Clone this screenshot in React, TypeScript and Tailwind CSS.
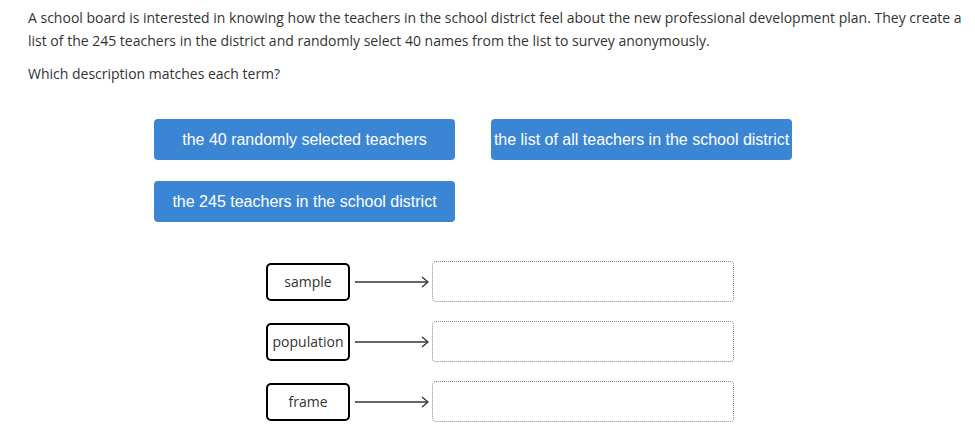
import React from "react";

const terms = ["sample", "population", "frame"];

function Arrow() {
  return (
    <svg width="76" height="14" viewBox="0 0 76 14" className="shrink-0">
      <line x1="0" y1="7" x2="73" y2="7" stroke="#333" strokeWidth="1.3" />
      <polyline points="67,2 73,7 67,12" fill="none" stroke="#333" strokeWidth="1.3" />
    </svg>
  );
}

export default function App() {
  return (
    <div className="w-[975px] h-[448px] bg-white pl-[28px] pt-[6px] text-[#333] font-['Open_Sans',sans-serif]">
      <p className="text-[14px] leading-[23px]">
        A school board is interested in knowing how the teachers in the school district feel about the new professional development plan. They create a
        <br />
        list of the 245 teachers in the district and randomly select 40 names from the list to survey anonymously.
      </p>
      <p className="text-[14px] leading-[23px] mt-[10px]">Which description matches each term?</p>

      <div className="ml-[126px] mt-[34px] grid grid-cols-[301px_301px] gap-x-[36px] gap-y-[21px] font-['Liberation_Sans',Arial,sans-serif] text-white text-[16px]">
        <div className="h-[41px] rounded-[4px] bg-[#3a86d4] flex items-center justify-center whitespace-nowrap">
          the 40 randomly selected teachers
        </div>
        <div className="h-[41px] rounded-[4px] bg-[#3a86d4] flex items-center justify-center whitespace-nowrap">
          the list of all teachers in the school district
        </div>
        <div className="h-[41px] rounded-[4px] bg-[#3a86d4] flex items-center justify-center whitespace-nowrap">
          the 245 teachers in the school district
        </div>
      </div>

      <div className="ml-[238px] mt-[39px] flex flex-col gap-[19px]">
        {terms.map((t) => (
          <div key={t} className="h-[41px] flex items-center">
            <div className="w-[84px] h-[38px] border-2 border-black rounded-[5px] flex items-center justify-center text-[14px] text-[#333]">
              {t}
            </div>
            <div className="ml-[5px]">
              <Arrow />
            </div>
            <div className="ml-[1px] w-[302px] h-[41px] border border-dotted border-[#888] rounded-[4px]" />
          </div>
        ))}
      </div>
    </div>
  );
}
